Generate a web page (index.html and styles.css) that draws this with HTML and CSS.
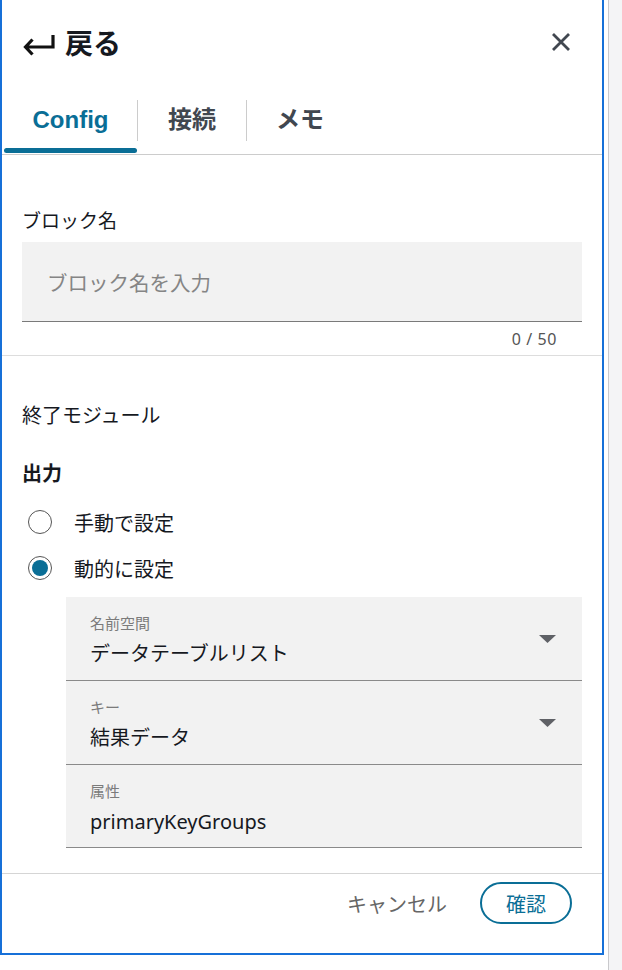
FILE: index.html
```html
<!DOCTYPE html>
<html lang="ja">
<head>
  <meta charset="UTF-8">
  <meta name="viewport" content="width=device-width, initial-scale=1.0">
  <title>ブロック設定</title>
  <link rel="stylesheet" href="styles.css">
</head>
<body>

  <div class="panel">
    <header class="head">
      <div class="back">
        <svg class="back-icon" width="32" height="22" viewBox="0 0 32 22">
          <path d="M2.5 13 H30 V1 M9.5 5.5 L2.5 13 L9.5 20.5" fill="none" stroke="#111" stroke-width="3.2" stroke-linejoin="miter"/>
        </svg>
        <span>戻る</span>
      </div>
      <svg class="close" width="20" height="20" viewBox="0 0 20 20">
        <path d="M2 2 L18 18 M18 2 L2 18" stroke="#414750" stroke-width="2.8"/>
      </svg>
    </header>

    <nav class="tabs">
      <div class="tab tab-config active"><span>Config</span><i class="bar"></i></div>
      <div class="sep"></div>
      <div class="tab tab-link"><span>接続</span></div>
      <div class="sep"></div>
      <div class="tab tab-memo"><span>メモ</span></div>
    </nav>

    <section class="block-name">
      <div class="label">ブロック名</div>
      <div class="input"><span class="placeholder">ブロック名を入力</span></div>
      <div class="counter">0 / 50</div>
    </section>

    <section class="output">
      <div class="module">終了モジュール</div>
      <div class="heading">出力</div>

      <div class="radio-row">
        <span class="radio"></span>
        <span class="radio-label">手動で設定</span>
      </div>
      <div class="radio-row">
        <span class="radio on"><i></i></span>
        <span class="radio-label">動的に設定</span>
      </div>

      <div class="fields">
        <div class="field">
          <div class="field-text">
            <div class="field-label">名前空間</div>
            <div class="field-value">データテーブルリスト</div>
          </div>
          <svg class="caret" width="17" height="8" viewBox="0 0 17 8"><polygon points="0,0 17,0 8.5,8" fill="#5f6166"/></svg>
        </div>
        <div class="field">
          <div class="field-text">
            <div class="field-label">キー</div>
            <div class="field-value">結果データ</div>
          </div>
          <svg class="caret" width="17" height="8" viewBox="0 0 17 8"><polygon points="0,0 17,0 8.5,8" fill="#5f6166"/></svg>
        </div>
        <div class="field last">
          <div class="field-text">
            <div class="field-label">属性</div>
            <div class="field-value">primaryKeyGroups</div>
          </div>
        </div>
      </div>
    </section>

    <footer class="foot">
      <span class="cancel">キャンセル</span>
      <button class="confirm">確認</button>
    </footer>
  </div>

  <div class="gutter"></div>
  <div class="side"></div>

</body>
</html>
```

FILE: styles.css
```css
* {
  margin: 0;
  padding: 0;
  box-sizing: border-box;
}

body {
  display: flex;
  height: 970px;
  background: #fff;
  font-family: "Noto Sans", "Noto Sans CJK JP", sans-serif;
  color: #16191f;
}

.panel {
  width: 604px;
  height: 955px;
  border: 2px solid #1670d8;
  border-top: none;
  display: flex;
  flex-direction: column;
}

.gutter {
  width: 4px;
}

.side {
  flex: 1;
  border-left: 1px solid #c9c9cc;
  background: #f4f4f6;
}

/* header */

.head {
  height: 84px;
  display: flex;
  align-items: center;
  justify-content: space-between;
  padding: 0 31px 0 21px;
}

.back {
  display: flex;
  align-items: center;
  gap: 10px;
  font-family: "Noto Sans CJK JP", sans-serif;
  font-size: 28px;
  font-weight: 700;
  line-height: 36px;
  color: #16191f;
}

.back-icon {
  margin-top: 6px;
}

/* tabs */

.tabs {
  display: flex;
  height: 59px;
  margin-top: 12px;
  border-bottom: 1px solid #cccccc;
  padding-left: 2px;
}

.tab {
  display: flex;
  flex-direction: column;
  align-items: center;
  justify-content: space-between;
  padding-top: 8px;
  font-family: "Liberation Sans", "Noto Sans CJK JP", sans-serif;
  font-size: 24px;
  font-weight: 700;
  line-height: 32px;
  color: #414750;
}

.tab-config { width: 133px; }
.tab-link { width: 108px; }
.tab-memo { width: 106px; }

.tab.active {
  color: #0a6e96;
}

.tab .bar {
  display: block;
  width: 100%;
  height: 5px;
  border-radius: 3px;
  background: #0a6e96;
  margin-bottom: 1px;
}

.sep {
  width: 1px;
  height: 41px;
  margin-top: 4px;
  background: #cccccc;
}

/* block name */

.block-name {
  padding: 54px 20px 6px;
  border-bottom: 1px solid #dddddd;
}

.label {
  font-size: 19px;
  line-height: 24px;
}

.input {
  margin-top: 9px;
  height: 80px;
  background: #f2f2f2;
  border-bottom: 1px solid #7a7a7a;
  display: flex;
  align-items: center;
  padding-left: 25px;
}

.placeholder {
  font-size: 20.5px;
  color: #858585;
}

.counter {
  margin-top: 7px;
  text-align: right;
  padding-right: 25px;
  font-size: 16px;
  line-height: 20px;
  color: #555;
  letter-spacing: 0.6px;
}

/* output */

.output {
  padding: 46px 20px 25px;
  border-bottom: 1px solid #d5d5d5;
}

.module {
  font-size: 20px;
  line-height: 28px;
}

.heading {
  margin-top: 30px;
  font-size: 20px;
  font-weight: 700;
  line-height: 28px;
}

.radio-row {
  display: flex;
  align-items: center;
  gap: 22px;
  height: 36px;
  margin-top: 10px;
  padding-left: 6px;
  font-size: 20px;
}

.heading + .radio-row {
  margin-top: 16px;
}

.radio {
  width: 24px;
  height: 24px;
  border: 1px solid #555;
  border-radius: 50%;
  display: flex;
  align-items: center;
  justify-content: center;
  background: #fff;
}

.radio i {
  width: 16px;
  height: 16px;
  border-radius: 50%;
  background: #0a6e96;
}

.fields {
  margin: 11px 0 0 44px;
}

.field {
  display: flex;
  align-items: center;
  justify-content: space-between;
  background: #f2f2f2;
  border-bottom: 1px solid #8a8a8a;
  padding: 17px 26px 12px 24px;
}

.field.last {
  padding-bottom: 11px;
}

.field-label {
  font-size: 15px;
  line-height: 18px;
  color: #7b7b7b;
}

.field-value {
  margin-top: 8px;
  font-size: 20px;
  line-height: 28px;
  color: #16191f;
}

.caret {
  margin-top: -5px;
}

/* footer */

.foot {
  display: flex;
  justify-content: flex-end;
  align-items: center;
  gap: 33px;
  padding: 8px 30px 0;
}

.cancel {
  font-size: 20px;
  color: #666;
}

.confirm {
  width: 92px;
  height: 42px;
  border: 2.5px solid #0a6e96;
  border-radius: 21px;
  background: #fff;
  color: #0a6e96;
  font-family: "Noto Sans CJK JP", sans-serif;
  font-size: 20px;
}
```
